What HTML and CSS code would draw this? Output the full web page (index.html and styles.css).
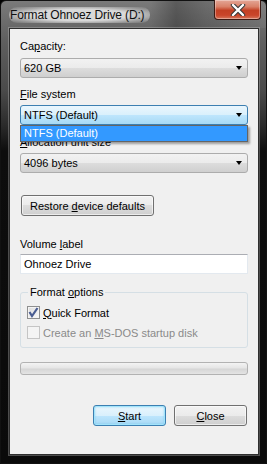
FILE: index.html
```html
<!DOCTYPE html>
<html lang="en">
<head>
  <meta charset="UTF-8" />
  <title>Format Ohnoez Drive (D:)</title>
  <link rel="stylesheet" href="styles.css">
</head>
<body>
  <div class="window">
    <div class="titlebar">
      <div class="title">Format Ohnoez Drive (D:)</div>
      <div class="close-x">
        <svg width="16" height="12" viewBox="0 0 16 12">
          <path d="M3 1 L13 11 M13 1 L3 11" stroke="#3a3a3a" stroke-width="4.4" stroke-linecap="round"/>
          <path d="M3 1 L13 11 M13 1 L3 11" stroke="#fff" stroke-width="2.4" stroke-linecap="round"/>
        </svg>
      </div>
    </div>
    <div class="client">
      <div class="label first">Ca<u>p</u>acity:</div>
      <div class="combo">620 GB<span class="arrow"></span></div>

      <div class="label gap-fs"><u>F</u>ile system</div>
      <div class="combo focused">NTFS (Default)<span class="arrow"></span>
        <div class="droplist">NTFS (Default)</div>
      </div>

      <div class="label gap-alloc"><u>A</u>llocation unit size</div>
      <div class="combo">4096 bytes<span class="arrow"></span></div>

      <button class="btn restore">Restore <u>d</u>evice defaults</button>

      <div class="label gap-vol">Volume <u>l</u>abel</div>
      <div class="textbox">Ohnoez Drive</div>

      <fieldset class="group">
        <legend>Format <u>o</u>ptions</legend>
        <div class="check-row">
          <span class="checkbox">
            <svg width="11" height="11" viewBox="0 0 11 11">
              <path d="M1.5 5 L4 9 L9.5 1" fill="none" stroke="#4a5d92" stroke-width="2.2"/>
            </svg>
          </span>
          <span><u>Q</u>uick Format</span>
        </div>
        <div class="check-row disabled">
          <span class="checkbox"></span>
          <span>Create an <u>M</u>S-DOS startup disk</span>
        </div>
      </fieldset>

      <div class="progress"></div>

      <div class="actions">
        <button class="btn default"><u>S</u>tart</button>
        <button class="btn"><u>C</u>lose</button>
      </div>
    </div>
  </div>
</body>
</html>
```

FILE: styles.css
```css
* { box-sizing: border-box; }
html, body {
  margin: 0;
  background: #000;
}
body {
  font-family: "Liberation Sans", Arial, sans-serif;
  font-size: 11px;
  color: #000;
}
.window {
  width: 267px;
  height: 464px;
  display: flex;
  flex-direction: column;
  padding: 0 7px 8px 8px;
  border: 1px solid #111;
  border-radius: 6px 6px 0 0;
  background: linear-gradient(to bottom, #7a7a7a 0, #5f5f5f 40px, #4a4a4a 90px, #2a2a2a 125px, #0d0d0d 150px, #0a0a0a 100%);
}
.titlebar {
  height: 27px;
  display: flex;
  justify-content: space-between;
  align-items: flex-start;
  background: linear-gradient(to right, rgba(255,255,255,0) 0, rgba(255,255,255,0) 150px, rgba(0,0,0,0.25) 175px, rgba(0,0,0,0.1) 205px, rgba(255,255,255,0.05) 100%);
  margin: 0 -7px 0 -8px;
  padding-left: 8px;
}
.title {
  margin-top: 6px;
  padding: 1px 6px 1px 1px;
  font-size: 12px;
  letter-spacing: -0.15px;
  color: #101010;
  border-radius: 10px;
  background: radial-gradient(ellipse at center, rgba(235,235,235,0.85) 50%, rgba(220,220,220,0.45) 75%, rgba(200,200,200,0) 100%);
}
.close-x {
  width: 47px;
  height: 20px;
  margin-right: 5px;
  margin-top: -1px;
  display: flex;
  align-items: center;
  justify-content: center;
  border: 1px solid #3b1a14;
  border-top: none;
  border-radius: 0 0 4px 4px;
  background: linear-gradient(to bottom, #e4a797 0, #d98169 35%, #c34024 55%, #c9452a 80%, #d5775c 100%);
  box-shadow: inset 0 0 0 1px rgba(255,255,255,0.35);
}
.client {
  flex: 1;
  background: #f0f0f0;
  border: 1px solid #2e2e2e;
  box-shadow: 0 0 0 1px rgba(200,200,200,0.35);
  padding: 0 10px 0 10px;
  display: flex;
  flex-direction: column;
}
.label {
  height: 15px;
  line-height: 15px;
}
.label.first { margin-top: 10px; }
.gap-fs { margin-top: 9px; }
.gap-alloc { margin-top: 10px; }
.gap-vol { margin-top: 21px; }
.combo {
  position: relative;
  height: 20px;
  line-height: 18px;
  margin-top: 4px;
  padding-left: 3px;
  border: 1px solid #acacac;
  border-radius: 3px;
  background: linear-gradient(to bottom, #f2f2f2 0, #ebebeb 50%, #dddddd 50%, #cfcfcf 100%);
}
.label + .combo { margin-top: 3px; }
.label.first + .combo { margin-top: 4px; }
.combo.focused {
  border-color: #3c7fb1;
  background: linear-gradient(to bottom, #eaf6fd 0, #d9f0fc 50%, #bee6fd 50%, #a7d9f5 100%);
}
.arrow {
  position: absolute;
  right: 5px;
  top: 7px;
  width: 0;
  height: 0;
  border-left: 3.5px solid transparent;
  border-right: 3.5px solid transparent;
  border-top: 4px solid #000;
}
.droplist {
  position: absolute;
  left: -1px;
  right: -1px;
  top: 19px;
  height: 17px;
  line-height: 15px;
  padding-left: 3px;
  background: #3399ff;
  color: #fff;
  border: 1px solid #646464;
  box-shadow: 2px 2px 2px rgba(0,0,0,0.35);
  z-index: 2;
}
.btn {
  font-family: inherit;
  font-size: 11px;
  color: #000;
  height: 21px;
  padding: 0;
  border: 1px solid #707070;
  border-radius: 3px;
  background: linear-gradient(to bottom, #f2f2f2 0, #ebebeb 50%, #dddddd 50%, #cfcfcf 100%);
  box-shadow: inset 0 0 0 1px rgba(255,255,255,0.6);
}
.restore {
  align-self: flex-start;
  width: 133px;
  margin-top: 22px;
  margin-left: 1px;
}
.textbox {
  height: 20px;
  line-height: 18px;
  margin-top: 2px;
  padding-left: 3px;
  background: #fff;
  border: 1px solid #e3e9ef;
  border-top-color: #abadb3;
}
.group {
  margin: 11px 0 0;
  padding: 0 6px 7px;
  border: 1px solid #d5dfe5;
  border-radius: 3px;
}
.group legend {
  padding: 0 2px;
  margin-left: 1px;
  line-height: 15px;
}
.check-row {
  display: flex;
  align-items: center;
  gap: 3px;
  height: 15px;
  margin-top: 5px;
}
.checkbox {
  width: 13px;
  height: 13px;
  display: flex;
  align-items: center;
  justify-content: center;
  border: 1px solid #8e8f8f;
  background: linear-gradient(to bottom right, #dcdcdc, #fbfbfb);
  box-shadow: inset 0 0 0 1px #f4f4f4;
}
.check-row.disabled { color: #8a8a8a; }
.check-row.disabled .checkbox {
  border-color: #c5c5c5;
  background: #f4f4f4;
  box-shadow: none;
}
.progress {
  height: 13px;
  margin-top: 14px;
  border: 1px solid #b2b2b2;
  border-radius: 3px;
  background: linear-gradient(to bottom, #f3f3f3 0, #e6e6e6 45%, #d6d6d6 55%, #e4e4e4 100%);
}
.actions {
  display: flex;
  justify-content: flex-end;
  gap: 8px;
  margin-top: 30px;
  padding-right: 1px;
}
.actions .btn { width: 73px; }
.btn.default {
  border-color: #3c7fb1;
  background: linear-gradient(to bottom, #eaf6fd 0, #d9f0fc 50%, #bee6fd 50%, #a7d9f5 100%);
  box-shadow: inset 0 0 0 1px #a2e4fb, inset 0 0 2px 1px rgba(80,190,240,0.5);
}
```
